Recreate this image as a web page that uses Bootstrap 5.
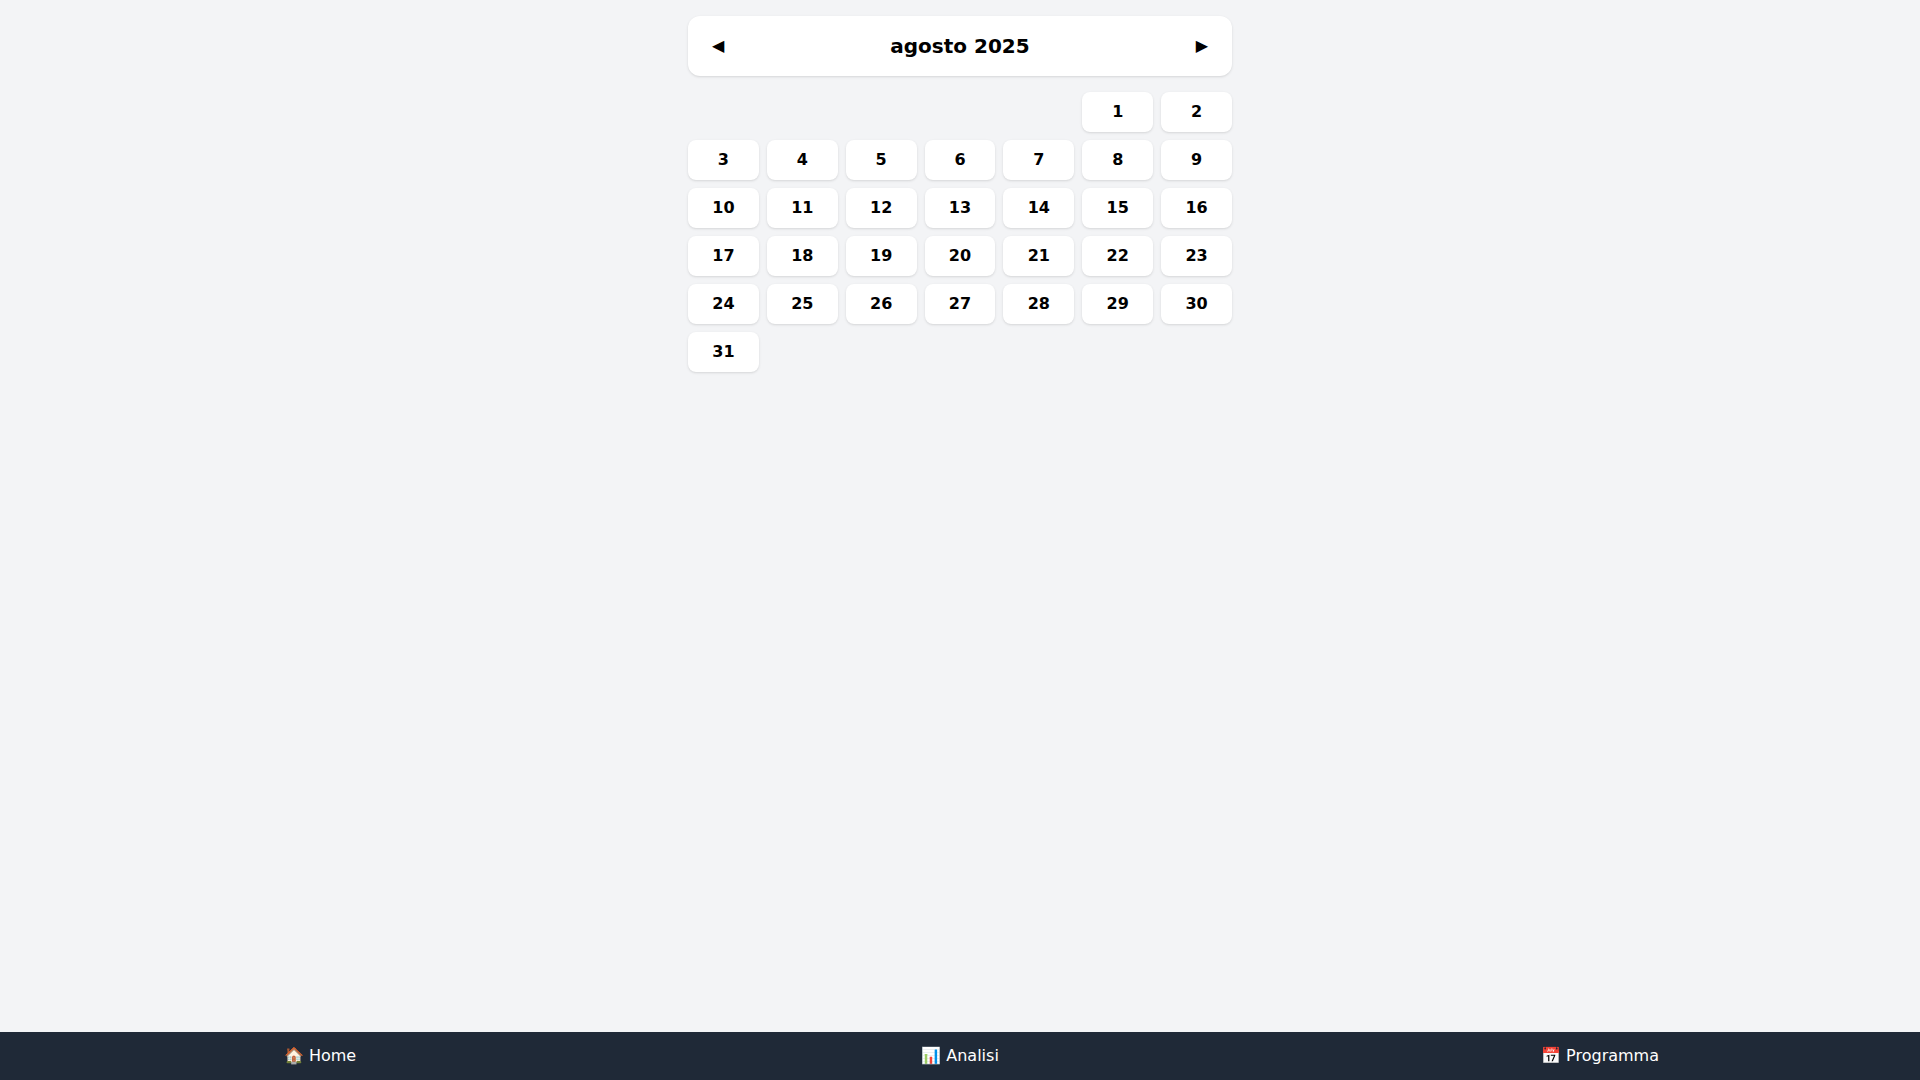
<!DOCTYPE html>
<html lang="it">
<head>
<meta charset="utf-8">
<meta name="viewport" content="width=device-width, initial-scale=1">
<title>Calendario</title>
<link rel="stylesheet" href="https://cdn.jsdelivr.net/npm/bootstrap@5.3.0/dist/css/bootstrap.min.css">
<style>
body { background: #f3f4f6; color: #000; font-family: "DejaVu Sans", sans-serif; font-size: 16px; line-height: 24px; }
.calendar { max-width: 576px; padding: 16px; }
.panel { background: #fff; border-radius: 12px; padding: 16px; box-shadow: 0 1px 3px rgba(0,0,0,.1), 0 1px 2px -1px rgba(0,0,0,.1); }
.month-title { font-size: 20px; line-height: 28px; }
.month-step { padding: 0 8px; border: 0; background: none; color: #000; font-size: 16px; line-height: 24px; }
.days { display: grid; grid-template-columns: repeat(7, minmax(0, 1fr)); gap: 8px; }
.day { border: 0; border-radius: 8px; background: #fff; color: #000; padding: 8px; font-size: 16px; line-height: 24px; font-weight: 700; box-shadow: 0 1px 3px rgba(0,0,0,.1), 0 1px 2px -1px rgba(0,0,0,.1); }
.day:first-child { grid-column-start: 6; }
.tabs { background: #1f2937; }
.tab-item { color: #fff; padding: 12px 0; }
</style>
<script defer src="https://cdn.jsdelivr.net/npm/bootstrap@5.3.0/dist/js/bootstrap.bundle.min.js"></script>
</head>
<body>
<main class="calendar mx-auto">
  <header class="panel d-flex justify-content-between align-items-center mb-3">
    <button type="button" class="month-step" aria-label="Mese precedente">◀</button>
    <h1 class="month-title fw-bold m-0">agosto 2025</h1>
    <button type="button" class="month-step" aria-label="Mese successivo">▶</button>
  </header>
  <div class="days">
    <button type="button" class="day">1</button><button type="button" class="day">2</button>
    <button type="button" class="day">3</button><button type="button" class="day">4</button><button type="button" class="day">5</button><button type="button" class="day">6</button><button type="button" class="day">7</button><button type="button" class="day">8</button><button type="button" class="day">9</button>
    <button type="button" class="day">10</button><button type="button" class="day">11</button><button type="button" class="day">12</button><button type="button" class="day">13</button><button type="button" class="day">14</button><button type="button" class="day">15</button><button type="button" class="day">16</button>
    <button type="button" class="day">17</button><button type="button" class="day">18</button><button type="button" class="day">19</button><button type="button" class="day">20</button><button type="button" class="day">21</button><button type="button" class="day">22</button><button type="button" class="day">23</button>
    <button type="button" class="day">24</button><button type="button" class="day">25</button><button type="button" class="day">26</button><button type="button" class="day">27</button><button type="button" class="day">28</button><button type="button" class="day">29</button><button type="button" class="day">30</button>
    <button type="button" class="day">31</button>
  </div>
</main>
<nav class="tabs fixed-bottom d-flex text-center" aria-label="Navigazione">
  <a href="#" class="tab-item flex-fill w-100 text-decoration-none">🏠 Home</a>
  <a href="#" class="tab-item flex-fill w-100 text-decoration-none">📊 Analisi</a>
  <a href="#" class="tab-item flex-fill w-100 text-decoration-none">📅 Programma</a>
</nav>
</body>
</html>
